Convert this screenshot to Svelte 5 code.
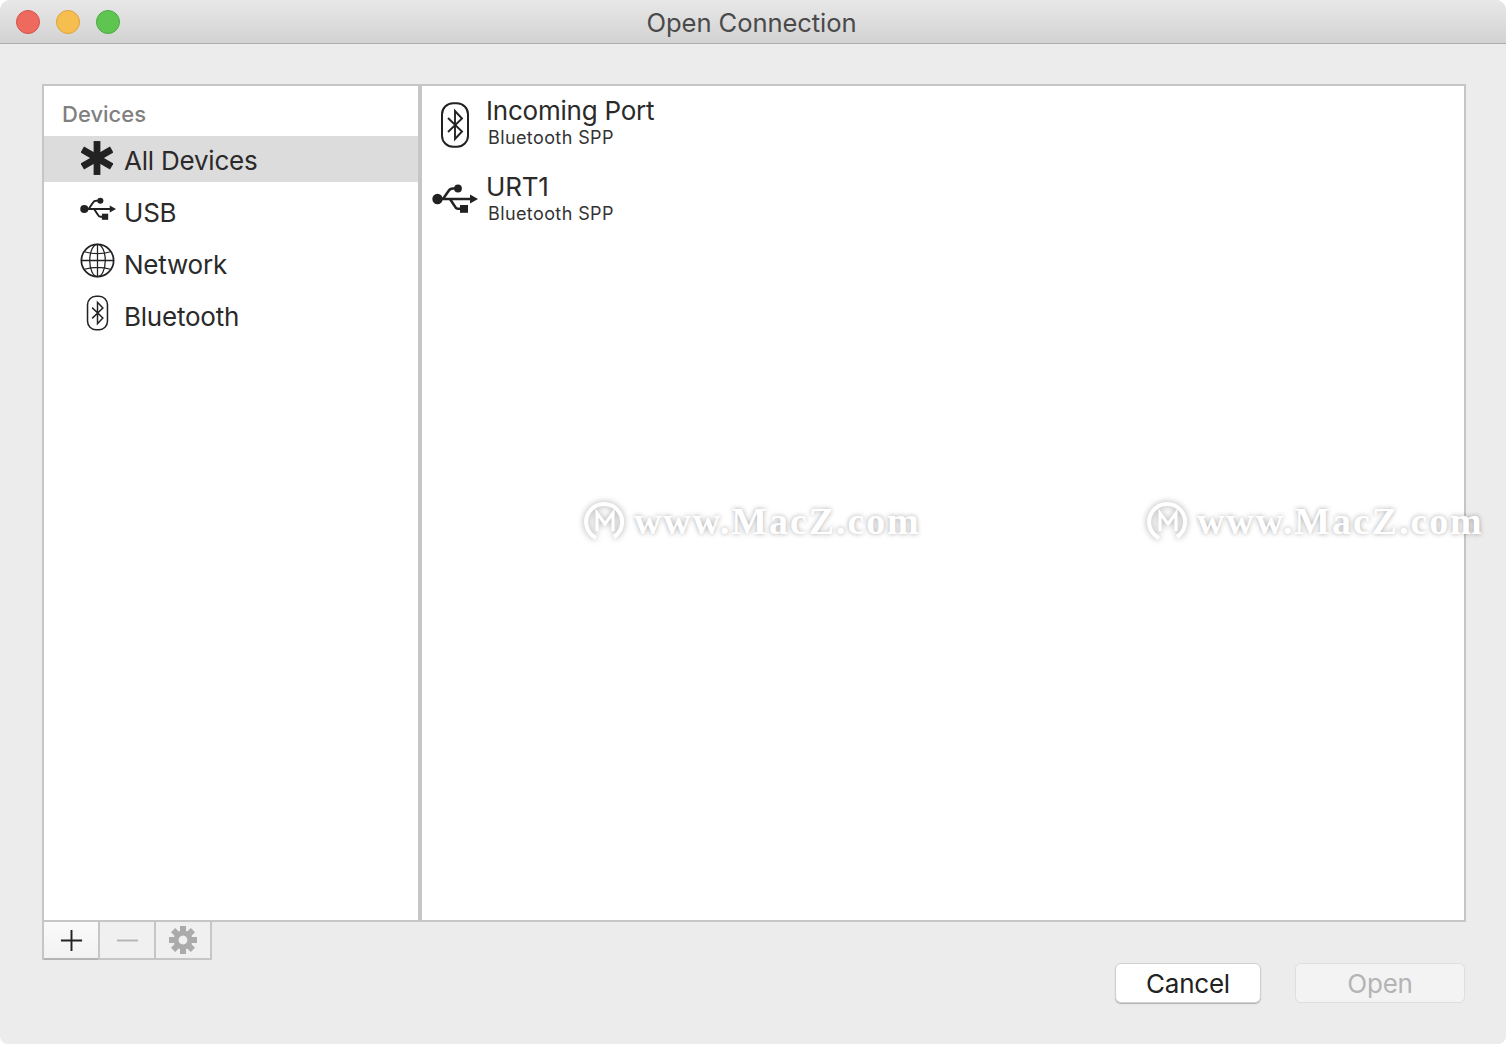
<script>
  const items = [
    { id: 'all', label: 'All Devices', active: true },
    { id: 'usb', label: 'USB' },
    { id: 'net', label: 'Network' },
    { id: 'bt', label: 'Bluetooth' }
  ];
  const marks = [0, 1];
</script>

{#snippet bt(cls)}
  <svg class={cls} viewBox="0 0 30 46" fill="none" stroke="#222">
    <rect x="2" y="1.2" width="26" height="43.6" rx="11" stroke-width="2" />
    <path d="M8 16 L22 29.5 L15 37 L15 9 L22 16.5 L8 30" stroke-width="1.9" stroke-linejoin="miter" />
  </svg>
{/snippet}

{#snippet usb(cls)}
  <svg class={cls} viewBox="0 0 46 30" fill="#222" stroke="none">
    <circle cx="5.5" cy="15" r="5.2" />
    <circle cx="26" cy="4.5" r="3.9" />
    <rect x="28" y="21" width="8" height="7.8" />
    <path d="M8 13.7 H38 V10.5 L46 15 L38 19.5 V16.3 H8 Z" />
    <path d="M11 15 L16.5 7 Q18 4.5 21 4.5 H26 M18 15 L23 22.5 Q24 24.8 26 24.8 H29" fill="none" stroke="#222" stroke-width="2.5" />
  </svg>
{/snippet}

<div class="window">
  <header class="titlebar">
    <div class="lights">
      <span class="light red"></span>
      <span class="light yellow"></span>
      <span class="light green"></span>
    </div>
    <div class="title">Open Connection</div>
  </header>

  <div class="body">
    <div class="panel">
      <aside class="sidebar">
        <div class="heading">Devices</div>
        {#each items as item}
          <div class="item" class:active={item.active}>
            <span class="icon">
              {#if item.id === 'all'}
                <svg class="i-all" viewBox="0 0 34 36" fill="#222">
                  <rect x="13.4" y="0" width="7.2" height="36" />
                  <rect x="13.4" y="0" width="7.2" height="36" transform="rotate(60 17 18)" />
                  <rect x="13.4" y="0" width="7.2" height="36" transform="rotate(-60 17 18)" />
                </svg>
              {:else if item.id === 'usb'}
                {@render usb('i-usb-s')}
              {:else if item.id === 'net'}
                <svg class="i-net" viewBox="0 0 36 36" fill="none" stroke="#222" stroke-width="1.3">
                  <circle cx="18" cy="18" r="16.6" stroke-width="1.8" />
                  <ellipse cx="18" cy="18" rx="8" ry="16.6" />
                  <path d="M18 1.4 V34.6 M1.4 18 H34.6 M4.5 9 Q18 13 31.5 9 M4.5 27 Q18 23 31.5 27" />
                </svg>
              {:else}
                {@render bt('i-bt-s')}
              {/if}
            </span>
            <span class="label">{item.label}</span>
          </div>
        {/each}
      </aside>
      <main class="list">
        <div class="row">
          <span class="row-icon">{@render bt('i-bt-l')}</span>
          <div class="row-text">
            <div class="name">Incoming Port</div>
            <div class="sub">Bluetooth SPP</div>
          </div>
        </div>
        <div class="row">
          <span class="row-icon">{@render usb('i-usb-l')}</span>
          <div class="row-text">
            <div class="name">URT1</div>
            <div class="sub">Bluetooth SPP</div>
          </div>
        </div>
      </main>
    </div>

    <div class="footer">
      <div class="tools">
        <div class="tool first">
          <svg viewBox="0 0 24 24" class="t-icon"><path d="M12 1 V23 M1 12 H23" stroke="#222" stroke-width="2" fill="none" /></svg>
        </div>
        <div class="tool">
          <svg viewBox="0 0 24 24" class="t-icon"><path d="M1 12 H23" stroke="#b4b4b4" stroke-width="2" fill="none" /></svg>
        </div>
        <div class="tool">
          <svg viewBox="0 0 28 28" class="t-gear">
            <g fill="#ababab">
              <path fill-rule="evenodd" d="M14 4.5 a9.5 9.5 0 1 0 0.01 0 Z M14 9.6 a4.4 4.4 0 1 1 -0.01 0 Z" />
              {#each [0, 45, 90, 135, 180, 225, 270, 315] as a}
                <rect x="11" y="0" width="6" height="6" transform="rotate({a} 14 14)" />
              {/each}
            </g>
          </svg>
        </div>
      </div>
      <div class="buttons">
        <button class="btn cancel"><span class="btn-text">Cancel</span></button>
        <button class="btn open" disabled><span class="btn-text">Open</span></button>
      </div>
    </div>
  </div>

  {#each marks as m}
    <div class="mark" class:second={m === 1}>
      <svg viewBox="0 0 42 42" class="mark-logo" fill="none" stroke="#fff" stroke-width="4">
        <path d="M12 38 A18 18 0 1 1 30 37" />
        <path d="M13 31 V13 L21 24 L29 13 V31" stroke-width="3" />
      </svg>
      <span>www.MacZ.com</span>
    </div>
  {/each}
</div>

<style>
  :global(body) {
    margin: 0;
    background: #fff;
  }
  .window {
    position: relative;
    width: 1506px;
    height: 1044px;
    background: #ececec;
    border-radius: 10px 10px 8px 8px;
    overflow: hidden;
    display: flex;
    flex-direction: column;
    font-family: Inter, "Liberation Sans", sans-serif;
    color: #262626;
  }
  .titlebar {
    position: relative;
    height: 44px;
    flex: none;
    box-sizing: border-box;
    display: flex;
    align-items: center;
    justify-content: center;
    background: linear-gradient(#e8e8e8, #d2d2d2);
    border-bottom: 1px solid #adadad;
  }
  .lights {
    position: absolute;
    left: 16px;
    top: 10px;
    display: flex;
    gap: 16px;
  }
  .light {
    width: 24px;
    height: 24px;
    border-radius: 50%;
    box-sizing: border-box;
  }
  .red { background: #ee6a5e; border: 1px solid #d5534a; }
  .yellow { background: #f6bd4f; border: 1px solid #dfa33a; }
  .green { background: #5ec551; border: 1px solid #4cab42; }
  .title {
    font-size: 25.6px;
    color: #4a4a4a;
    margin-top: 1px;
    margin-right: 3px;
    letter-spacing: -0.1px;
  }
  .body {
    flex: 1;
    display: flex;
    flex-direction: column;
    padding: 40px 40px 0 42px;
  }
  .panel {
    height: 838px;
    box-sizing: border-box;
    display: flex;
    border: 2px solid #c6c6c6;
    background: #fff;
  }
  .sidebar {
    width: 374px;
    flex: none;
    border-right: 4px solid #c6c6c6;
    box-sizing: content-box;
  }
  .heading {
    height: 50px;
    box-sizing: border-box;
    padding: 15px 0 0 18px;
    font-size: 22px;
    line-height: 27px;
    font-weight: 500;
    color: #808080;
  }
  .item {
    height: 46px;
    margin-bottom: 6px;
    display: flex;
    align-items: center;
  }
  .item.active {
    background: #dcdcdc;
  }
  .icon {
    width: 80px;
    padding-left: 36px;
    box-sizing: border-box;
    flex: none;
    display: flex;
    justify-content: flex-start;
    margin-top: -5px;
  }
  .icon :global(svg) {
    display: block;
  }
  .i-all { width: 32px; height: 34px; margin: 2px 0 0 1px; }
  .i-net { width: 35px; height: 35px; }
  :global(.i-usb-s) { width: 36px; height: 24px; }
  :global(.i-bt-s) { width: 23px; height: 36px; margin-left: 6px; }
  :global(.i-bt-l) { width: 30px; height: 46px; display: block; margin-left: 2px; }
  :global(.i-usb-l) { width: 46px; height: 30px; display: block; margin: -4px 0 0 2px; }
  .label {
    font-size: 26px;
    line-height: 32px;
    color: #2a2a2a;
    letter-spacing: -0.22px;
    padding-top: 4px;
  }
  .list {
    flex: 1;
  }
  .row {
    height: 76px;
    display: flex;
    position: relative;
  }
  .row-icon {
    width: 64px;
    flex: none;
    display: flex;
    justify-content: center;
    align-items: center;
    margin-top: 2px;
  }
  .row-text {
    padding-top: 9px;
  }
  .name {
    font-size: 26px;
    line-height: 32px;
    color: #2a2a2a;
    letter-spacing: -0.22px;
  }
  .sub {
    font-size: 18px;
    line-height: 22px;
    padding-left: 2px;
    color: #333;
    letter-spacing: 0.4px;
  }
  .footer {
    display: flex;
    justify-content: space-between;
    align-items: flex-start;
  }
  .tools {
    display: flex;
    height: 38px;
    box-sizing: border-box;
    border: 2px solid #c6c6c6;
    border-top: none;
  }
  .tool {
    width: 54px;
    display: flex;
    align-items: center;
    justify-content: center;
    background: #f0f0f0;
    border-left: 2px solid #c6c6c6;
  }
  .tool.first {
    width: 54px;
    background: linear-gradient(#fafafa, #f2f2f2);
    border-left: none;
    box-shadow: 0 2px 0 #b4b4b4;
  }
  .t-icon { width: 23px; height: 23px; }
  .t-gear { width: 28px; height: 28px; }
  .buttons {
    display: flex;
    gap: 34px;
    margin-top: 41px;
    margin-right: 1px;
  }
  .btn {
    height: 40px;
    box-sizing: border-box;
    border-radius: 6px;
    font-family: inherit;
    font-size: 26px;
    padding: 2px 0 0;
    line-height: 1;
    letter-spacing: -0.25px;
  }
  .cancel {
    width: 146px;
    background: #fff;
    color: #222;
    border: 1px solid #d0d0d0;
    box-shadow: 0 1px 1px rgba(0, 0, 0, 0.25);
  }
  .open {
    width: 170px;
    background: #f3f3f3;
    color: #b4b4b4;
    border: 1px solid #dedede;
  }
  .mark {
    position: absolute;
    left: 584px;
    top: 499px;
    display: flex;
    align-items: center;
    gap: 8px;
    font-family: "Liberation Serif", serif;
    font-weight: 700;
    font-size: 38px;
    color: #fff;
    letter-spacing: 1.9px;
    white-space: nowrap;
    text-shadow: 0 0 5px rgba(0, 0, 0, 0.35);
  }
  .mark.second {
    left: 1147px;
  }
  .mark-logo {
    width: 42px;
    height: 42px;
    filter: drop-shadow(0 0 3px rgba(0, 0, 0, 0.35));
  }
</style>
